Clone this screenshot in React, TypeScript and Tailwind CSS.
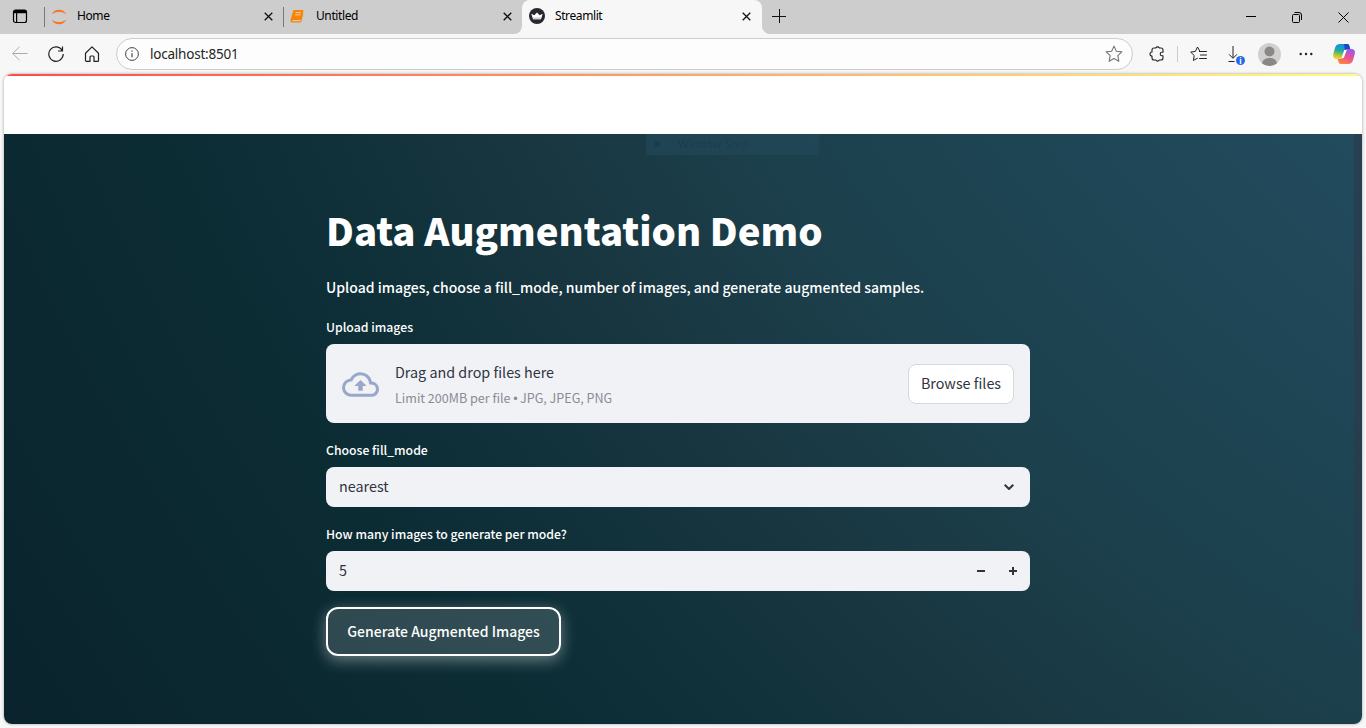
import React from "react";

const P = "font-['Noto_Sans_CJK_SC','Noto_Sans',sans-serif]";

function Tab({ title, icon, active = false }: { title: string; icon: React.ReactNode; active?: boolean }) {
  return (
    <div className={active ? "relative flex h-[34px] w-[240px] items-center rounded-t-[8px] bg-[#f7f7f7] pb-px pl-[7px] pr-[11px]" : "relative flex h-[34px] w-[239px] items-center pb-px pl-[6px] pr-[11px]"}>
      <span className="flex w-[26px] shrink-0">{icon}</span>
      <span className="flex-1 pb-px text-[12px] leading-4 tracking-[-0.4px] text-black">{title}</span>
      <svg className="h-[9px] w-[9px]" viewBox="0 0 9 9" stroke="#111" strokeWidth="1.3"><path d="M.7.7l7.6 7.6M8.3.7L.7 8.3" /></svg>
    </div>
  );
}

function TitleBar() {
  return (
    <div className="flex h-[34px] items-center bg-[#cdcdcd]">
      <div className="flex w-[44px] justify-center pb-[2px] pr-[4px]">
        <svg className="h-4 w-4" viewBox="0 0 16 16" fill="none"><rect x="1.500" y="2" width="13" height="12.500" rx="2" stroke="#000" strokeWidth="1.200" /><path d="M1.500 5.200V4a2 2 0 012-2h9a2 2 0 012 2v1.200z" fill="#000" /><path d="M4.600 4v10.500" stroke="#000" strokeWidth="1.200" /></svg>
      </div>
      <div className="h-5 w-px bg-[#777]" />
      <Tab title="Home" icon={<svg className="h-4 w-4" viewBox="0 0 16 16" fill="#f37726"><path d="M.8 5.300C2.200 2.200 5 .8 8 .8s5.800 1.400 7.200 4.500C13 3.600 10.600 3 8 3S3 3.600.8 5.300zM.8 10.700C2.200 13.800 5 15.200 8 15.200s5.800-1.400 7.200-4.500C13 12.400 10.600 13 8 13s-5-.6-7.200-2.300z" /></svg>} />
      <div className="-ml-px h-5 w-px bg-[#777]" />
      <Tab title="Untitled" icon={<svg className="mb-px h-4 w-[14px]" viewBox="0 0 14 16"><path d="M4.300 2h8c.9 0 1.300.6 1 1.500l-2 7.500c-.2.700-.7 1-1.400 1H2.800c-.9 0-.9 1.300 0 1.300h7.700L12.800 5l.6.5-2 8c-.2.800-.7 1.100-1.400 1.100H2.500C1 14.600.1 13.500.5 12L3 3.200C3.200 2.400 3.600 2 4.300 2z" fill="#f98307" /><path d="M5.500 4.700h5.500M4.900 6.900h5.500" stroke="#ffd9ab" strokeWidth=".9" /></svg>} />
      <div className="relative -ml-px">
        <svg className="absolute -left-2 bottom-0 h-2 w-2" viewBox="0 0 8 8"><path d="M8 0v8H0a8 8 0 008-8z" fill="#f7f7f7" /></svg>
        <Tab active title="Streamlit" icon={<svg className="mb-px h-4 w-4" viewBox="0 0 16 16"><circle cx="8" cy="8" r="8" fill="#262730" /><path d="M2.300 5.700l3 1.600L8 4.600l2.700 2.700 3-1.600-1.700 5.500H4z" fill="#fff" /><path d="M4 9.500h8l-.5 1.700h-7z" fill="#ccc" /></svg>} />
        <svg className="absolute -right-2 bottom-0 h-2 w-2" viewBox="0 0 8 8"><path d="M0 0v8h8a8 8 0 01-8-8z" fill="#f7f7f7" /></svg>
      </div>
      <svg className="mb-[3px] ml-[10px] h-[14px] w-[14px]" viewBox="0 0 14 14" stroke="#111"><path d="M7.500 0v14M0 7.500h14" /></svg>
      <div className="ml-auto flex items-center gap-[36px] pr-[17px]">
        <svg className="h-[11px] w-[10px]" viewBox="0 0 10 11" stroke="#000"><path d="M0 4.500h10" /></svg>
        <svg className="h-[11px] w-[10px]" viewBox="0 0 10 11" stroke="#000" fill="none"><rect x=".5" y="2.500" width="7" height="8" rx="1" /><path d="M2.500.5H7a2.500 2.500 0 012.500 2.500v5" /></svg>
        <svg className="h-[11px] w-[11px]" viewBox="0 0 11 11" stroke="#000"><path d="M.5.5l10 10M10.500.5l-10 10" /></svg>
      </div>
    </div>
  );
}

const STAR = "M8 1l2.100 4.500 4.900.6-3.600 3.400.9 4.900L8 12l-4.300 2.400.9-4.900L1 6.100l4.900-.6z";

function Toolbar() {
  return (
    <div className="flex h-[40px] items-center bg-[#f7f7f7] pl-[12px] pr-[11px]">
      <svg className="h-4 w-4" viewBox="0 0 16 16" stroke="#aaa" fill="none"><path d="M15.500 7.500H.7M7.500.8L.7 7.500l6.800 6.700" /></svg>
      <svg className="ml-5 h-4 w-4" viewBox="0 0 16 16" stroke="#222" strokeWidth="1.200" fill="none"><path d="M14.300 4.600A7.200 7.200 0 1 0 15.200 8M14.500.5v4.500h-4.500" /></svg>
      <svg className="ml-5 h-4 w-4" viewBox="0 0 16 16" stroke="#222" strokeWidth="1.200" fill="none"><path d="M1.500 7.200L8 .9l6.500 6.300v7.200a1 1 0 01-1 1H10V11a1 1 0 00-1-1H7a1 1 0 00-1 1v4.400H2.500a1 1 0 01-1-1z" strokeLinejoin="round" /></svg>
      <div className="ml-4 flex h-[32px] w-[1017px] items-center rounded-full border border-[#cccccc] bg-[#fdfdfd] px-[8px]">
        <svg className="h-[14px] w-[14px]" viewBox="0 0 14 14" stroke="#444" fill="none"><circle cx="7" cy="7" r="6.400" /><path d="M7 6.200v4M7 3.500v1.200" strokeWidth="1.200" /></svg>
        <span className="ml-[11px] flex-1 text-[13.500px] tracking-[-0.22px] text-[#252525]">localhost:8501</span>
        <svg className="mr-px h-[18px] w-[18px]" viewBox="0 0 16 16" fill="none" stroke="#777"><path d={STAR} strokeLinejoin="round" /></svg>
      </div>
      <svg className="ml-[16px] h-4 w-4" viewBox="0 0 16 16" fill="none" stroke="#222" strokeWidth="1.100" strokeLinejoin="round"><path d="M5 2h1.800a2 2 0 013.600 0H12a2 2 0 012 2v2.200h-1a1.800 1.800 0 000 3.600h1V12a2 2 0 01-2 2h-1.600a2 2 0 01-3.600 0H5a2 2 0 01-2-2v-2a2 2 0 010-4V4a2 2 0 012-2z" /></svg>
      <div className="ml-[12px] h-4 w-px bg-[#ccc]" />
      <svg className="ml-3 h-4 w-[17px]" viewBox="0 0 17 16" fill="none" stroke="#222" strokeLinejoin="round" strokeLinecap="round"><path d="M9.500 5.500H10L7.500 1 5.400 5.400.7 6.100l3.500 3.400-.8 4.900 4.100-2.200M9.500 5.500h7M10.500 9h6M9.500 12.500h7" /></svg>
      <div className="relative ml-[21px] h-4 w-4">
        <svg className="h-4 w-[10px]" viewBox="0 0 10 16" fill="none" stroke="#222"><path d="M5 0v12M1 8.300l4 4 4-4M.5 15.500h6" /></svg>
        <div className="absolute left-[8px] top-[10px] flex h-[9px] w-[9px] items-center justify-center rounded-full bg-[#2268e8] text-[8px] font-bold leading-[9px] text-white">i</div>
      </div>
      <svg className="ml-[14px] h-[23px] w-[23px]" viewBox="0 0 23 23"><circle cx="11.500" cy="11.500" r="11.500" fill="#d2d0ce" /><circle cx="11.500" cy="8.500" r="5" fill="#8a8886" /><path d="M4 20.200c1-3.800 3.600-5.200 7.500-5.200s6.500 1.400 7.500 5.200a11.500 11.500 0 01-15 0z" fill="#8a8886" /></svg>
      <svg className="ml-[18px] h-4 w-[14px]" viewBox="0 0 14 16" fill="#222"><circle cx="1.700" cy="8" r="1.200" /><circle cx="7" cy="8" r="1.200" /><circle cx="12.300" cy="8" r="1.200" /></svg>
      <svg className="ml-auto h-[22px] w-[22px]" viewBox="0 0 22 22">
        <defs>
          <linearGradient id="ca" x1=".5" y1="0" x2=".3" y2="1"><stop stopColor="#168de8" /><stop offset=".45" stopColor="#22a9a1" /><stop offset=".75" stopColor="#a9c83b" /><stop offset="1" stopColor="#ffd328" /></linearGradient>
          <linearGradient id="cb" x1=".7" y1="0" x2=".3" y2="1"><stop stopColor="#9a55f0" /><stop offset=".5" stopColor="#e65298" /><stop offset="1" stopColor="#ff853d" /></linearGradient>
        </defs>
        <path d="M7 1h7.500c1.400 0 1.700 1.400 2.100 3l.6 2h-2.500c-1.600 0-2.300.8-2.700 2.300L10.300 14c-.5 1.400-1.200 2-2.600 2H3.500C.5 16-.4 13.500.4 10.500l1.700-6C2.900 2 4.500 1 7 1z" fill="url(#ca)" />
        <path d="M11 1h3.500c1.400 0 1.700 1.400 2.100 3l.6 2h-2.500c-1.400 0-2.100.6-2.600 1.800z" fill="#1748c9" />
        <path d="M15 21H7.500c-1.400 0-1.800-1.400-2.200-3l-.6-2h3c1.400 0 2.100-.6 2.600-2L12 8.300C12.400 6.800 13.100 6 14.700 6h3.800c3 0 3.900 2.500 3.100 5.500l-1.700 6C19.100 20 17.500 21 15 21z" fill="url(#cb)" />
        <path d="M11.200 7h2.600l-1.200 3-1.800 5H8.300l1.500-3.500z" fill="#fff" />
      </svg>
    </div>
  );
}

function Label({ children }: { children: React.ReactNode }) {
  return <div className="h-[20px] whitespace-nowrap text-[12.250px] font-medium leading-[20px] text-white">{children}</div>;
}

export default function App() {
  return (
    <div className="flex h-[728px] w-[1366px] flex-col overflow-hidden bg-[#f7f7f7] font-['Noto_Sans',sans-serif]">
      <TitleBar />
      <Toolbar />
      <div className="mx-1 flex h-[650px] flex-col overflow-hidden rounded-[8px] bg-white shadow-[0_0_3px_#999]">
        <div className="h-[2px] shrink-0 bg-[linear-gradient(90deg,#ff4b4b,#fffd80)]" />
        <div className="h-[58px] shrink-0 bg-white" />
        <main className={`relative flex-1 bg-[radial-gradient(circle_2580px_at_2139px_-851px,#224b5e_45%,#1e4554_55%,#1c404c_63%,#183640_71.5%,#0f3039_79%,#0c2c34_84%,#0a232c_100%)] pl-[322px] ${P}`}>
          <div className="absolute left-[642px] top-0 flex h-[21px] w-[173px] items-center bg-[#244c60]/50 pb-px pl-[8px] text-[11.500px] text-black/15">
            <span className="mr-[18px] h-[6px] w-[6px] rounded-full bg-black/10" />
            <span className="font-['Noto_Sans',sans-serif]">Window Snip</span>
          </div>
          <div className="absolute right-0 top-0 h-[497px] w-[8px] bg-[#293b4b]/60" />
          <h1 className="whitespace-nowrap pt-[68px] text-[38.250px] font-black leading-[56px] text-white">Data Augmentation Demo</h1>
          <p className="mt-[17px] h-[24px] whitespace-nowrap text-[14px] font-medium leading-[24px] text-white">Upload images, choose a fill_mode, number of images, and generate augmented samples.</p>
          <div className="mt-[18px]"><Label>Upload images</Label></div>
          <section className="mt-[7px] flex h-[79px] w-[704px] items-center rounded-[8px] bg-[#f0f2f6] px-4">
            <svg className="mt-px h-[37px] w-[37px]" viewBox="0 0 24 24" fill="#98a8c9"><path d="M19.350 10.040A7.490 7.490 0 0012 4C9.110 4 6.600 5.640 5.350 8.040A5.994 5.994 0 000 14c0 3.310 2.690 6 6 6h13c2.760 0 5-2.240 5-5 0-2.640-2.050-4.780-4.650-4.960zM19 18H6c-2.210 0-4-1.790-4-4 0-2.050 1.530-3.760 3.560-3.970l1.070-.11.500-.95A5.469 5.469 0 0112 6c2.620 0 4.880 1.860 5.390 4.430l.3 1.500 1.530.11A2.980 2.980 0 0122 15c0 1.650-1.350 3-3 3zM8 13h2.550v3h2.900v-3H16l-4-4z" /></svg>
            <div className="ml-4 flex flex-1 flex-col pt-[2px]">
              <span className="h-[26px] text-[14.350px] leading-[24px] text-[#31333f]">Drag and drop files here</span>
              <span className="h-[24px] text-[12.550px] leading-[24px] text-[#8a8c95]">Limit 200MB per file <span className="font-['Liberation_Sans',sans-serif] tracking-[-0.5px]">•</span> JPG, JPEG, PNG</span>
            </div>
            <button className="h-[40px] w-[106px] whitespace-nowrap rounded-[8px] border border-[#d6d7db] bg-white pb-[2px] text-[14.350px] text-[#31333f]">Browse files</button>
          </section>
          <div className="mt-[17px]"><Label>Choose fill_mode</Label></div>
          <div className="mt-[7px] flex h-[40px] w-[704px] items-center justify-between rounded-[8px] bg-[#f0f2f6] pl-[13px] pr-[16px] text-[14.350px] text-[#31333f]">
            <span className="pb-[2px]">nearest</span>
            <svg className="h-[6px] w-[10px]" viewBox="0 0 10 6" fill="none" stroke="#31333f" strokeWidth="2"><path d="M.7.7L5 5 9.300.7" /></svg>
          </div>
          <div className="mt-[17px]"><Label>How many images to generate per mode?</Label></div>
          <div className="mt-[7px] flex h-[40px] w-[704px] items-center rounded-[8px] bg-[#f0f2f6] pl-[13px] pr-[13px] text-[14.350px] text-[#31333f]">
            <span className="flex-1 pb-[2px]">5</span>
            <svg className="h-[8px] w-[8px]" viewBox="0 0 8 8" stroke="#31333f" strokeWidth="2"><path d="M0 4h8" /></svg>
            <svg className="ml-6 h-[8px] w-[8px]" viewBox="0 0 8 8" stroke="#31333f" strokeWidth="2"><path d="M0 4h8M4 0v8" /></svg>
          </div>
          <button className="mt-4 block h-[49px] w-[235px] whitespace-nowrap rounded-[12px] border-2 border-white bg-white/15 text-[14px] font-medium text-white shadow-[0_4px_15px_rgba(255,255,255,0.4)]">Generate Augmented Images</button>
        </main>
      </div>
    </div>
  );
}
